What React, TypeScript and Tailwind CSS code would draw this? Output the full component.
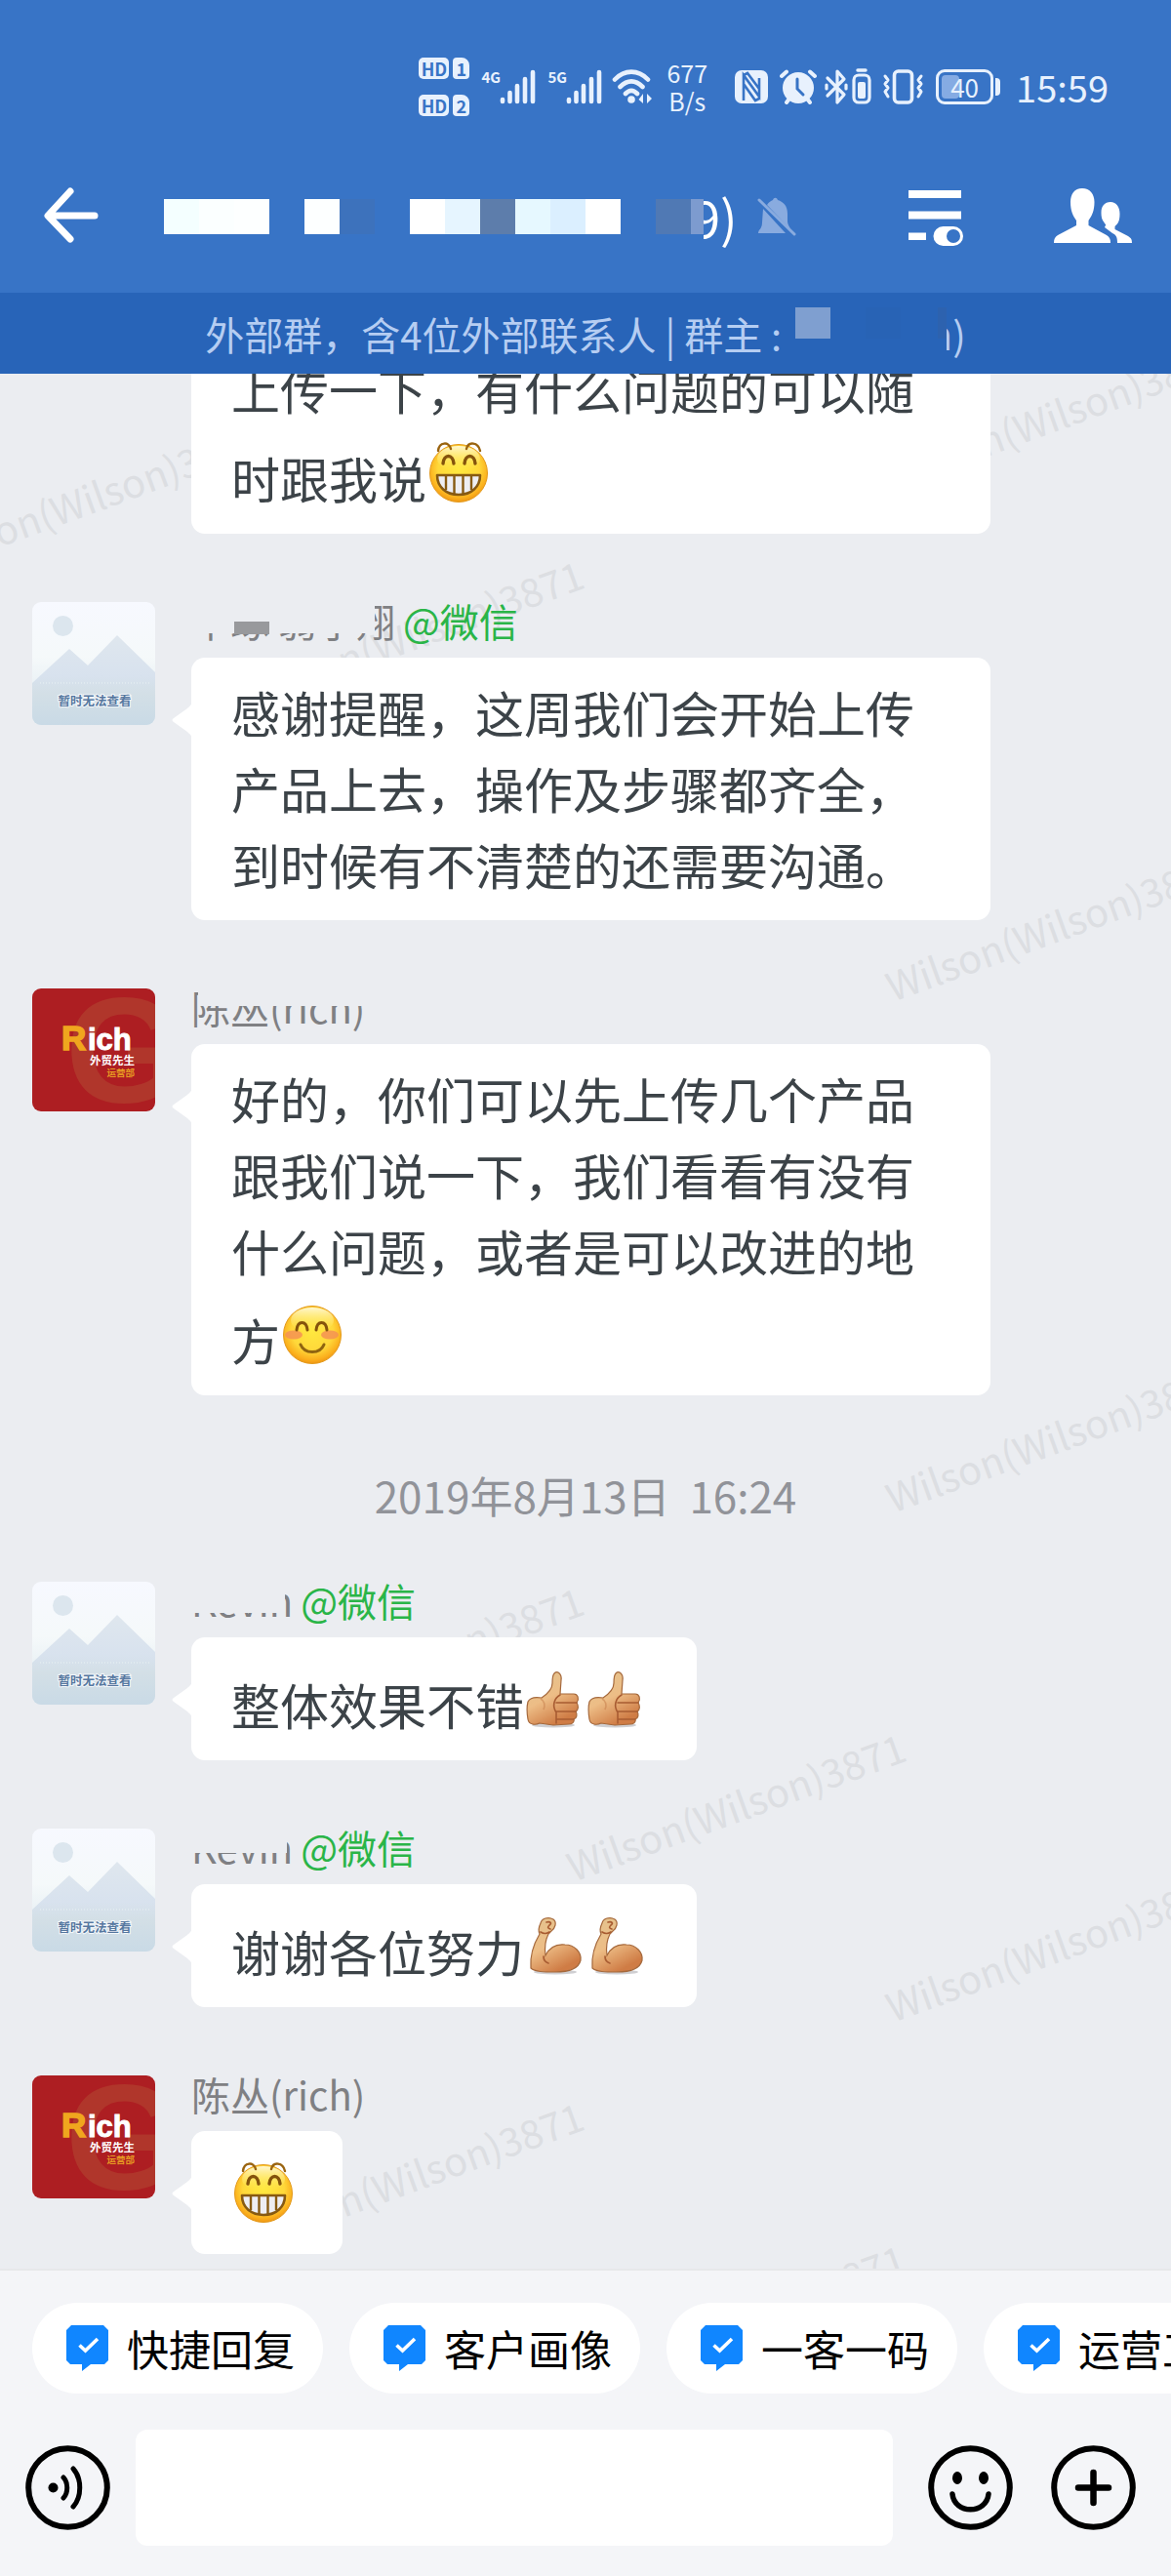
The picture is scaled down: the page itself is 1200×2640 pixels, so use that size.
import type { ReactNode } from "react";

type EmojiName = "grin" | "smile" | "thumb" | "muscle";

type Message = {
  id: number;
  avatar?: "placeholder" | "rich";
  name?: string;
  wechat?: boolean;
  // patches that hide parts of the sender's name
  masks?: string[];
  text: string;
  emojis: EmojiName[];
};

const BEFORE: Message[] = [
  {
    id: 1,
    text: "上传一下，有什么问题的可以随时跟我说",
    emojis: ["grin"],
  },
  {
    id: 2,
    avatar: "placeholder",
    name: "中琢 弱子翔",
    wechat: true,
    masks: [
      "left-0 top-0 h-8 w-[188px] bg-[#ebedf1]",
      "left-[44px] top-5 h-[13px] w-9 bg-[#98999c]",
    ],
    text: "感谢提醒，这周我们会开始上传产品上去，操作及步骤都齐全，到时候有不清楚的还需要沟通。",
    emojis: [],
  },
  {
    id: 3,
    avatar: "rich",
    name: "陈丛(rich)",
    masks: ["left-[7px] -top-2 h-[26px] w-[180px] bg-[#ebedf1]"],
    text: "好的，你们可以先上传几个产品跟我们说一下，我们看看有没有什么问题，或者是可以改进的地方",
    emojis: ["smile"],
  },
];

const AFTER: Message[] = [
  {
    id: 4,
    avatar: "placeholder",
    name: "Kevin",
    wechat: true,
    masks: ["left-0 top-0 h-8 w-[96px] bg-[#ebedf1]"],
    text: "整体效果不错",
    emojis: ["thumb", "thumb"],
  },
  {
    id: 5,
    avatar: "placeholder",
    name: "Kevin",
    wechat: true,
    masks: ["left-0 top-0 h-[25px] w-[98px] bg-[#ebedf1]"],
    text: "谢谢各位努力",
    emojis: ["muscle", "muscle"],
  },
  {
    id: 6,
    avatar: "rich",
    name: "陈丛(rich)",
    text: "",
    emojis: ["grin"],
  },
];

const TITLE_BLOCKS = [
  "bg-[#f4ffff]",
  "bg-[#fbffff]",
  "bg-[#fdffff]",
  "bg-transparent",
  "bg-[#fdffff]",
  "bg-[#3d72bc]",
  "bg-transparent",
  "bg-white",
  "bg-[#e6f5ff]",
  "bg-[#5d7dab]",
  "bg-[#e6f8ff]",
  "bg-[#dbefff]",
  "bg-white",
  "bg-transparent",
  "bg-[#5079b4]",
];

const WATERMARKS = [
  [-72, 204],
  [258, 344],
  [915, 120],
  [915, 644],
  [915, 1168],
  [258, 1396],
  [588, 1546],
  [915, 1690],
  [258, 1924],
  [588, 2070],
];

const SHORTCUTS = ["快捷回复", "客户画像", "一客一码", "运营工具"];

const Gradients = () => (
  <svg className="absolute size-0" aria-hidden="true">
    <defs>
      <radialGradient id="face" cx="0.5" cy="0.42" r="0.6">
        <stop offset="0" stopColor="#ffe93f" />
        <stop offset="0.6" stopColor="#ffd83a" />
        <stop offset="0.85" stopColor="#fbb01d" />
        <stop offset="1" stopColor="#ec8f10" />
      </radialGradient>
      <linearGradient id="shine" x1="0" y1="0" x2="0" y2="1">
        <stop offset="0" stopColor="#fffbe0" stopOpacity="0.9" />
        <stop offset="1" stopColor="#ffe94a" stopOpacity="0" />
      </linearGradient>
      <linearGradient id="skin" x1="0" y1="0" x2="0.5" y2="1">
        <stop offset="0" stopColor="#e3c48f" />
        <stop offset="0.55" stopColor="#edbd86" />
        <stop offset="1" stopColor="#cf7c45" />
      </linearGradient>
      <linearGradient id="sky" x1="0" y1="0" x2="0" y2="1">
        <stop offset="0" stopColor="#f7f9ff" />
        <stop offset="0.45" stopColor="#f5f9fa" />
        <stop offset="1" stopColor="#dbe6ee" />
      </linearGradient>
      <linearGradient id="hill" x1="0" y1="0" x2="0" y2="1">
        <stop offset="0" stopColor="#dfe7ee" />
        <stop offset="0.45" stopColor="#d8e2ee" />
        <stop offset="0.65" stopColor="#d3dfe6" />
        <stop offset="1" stopColor="#c9dae6" />
      </linearGradient>
    </defs>
  </svg>
);

const Emoji = ({ name }: { name: EmojiName }) => (
  <svg
    viewBox="0 0 63 60"
    className="mt-[18px] inline-block h-[60px] w-[63px] overflow-visible align-[-4px]"
    role="img"
    aria-label={name}
  >
    {(name === "grin" || name === "smile") && (
      <>
        <circle cx="33" cy="30" r="29.5" fill="url(#face)" stroke="#e39a1c" />
        <ellipse cx="33" cy="15" rx="22" ry="13" fill="url(#shine)" />
      </>
    )}
    {name === "grin" && (
      <g transform="translate(1 0)">
        <g fill="none" stroke="#9a6410" strokeWidth="2.4" strokeLinecap="round">
          <path d="M11 7C12-2 22-3 24 5" />
          <path d="M40 5C42-3 52-2 54 7" />
        </g>
        <g fill="none" stroke="#84530c" strokeWidth="3.4" strokeLinecap="round">
          <path d="M16 20C17 10 26 10 27 20" />
          <path d="M38 20C39 10 48 10 49 20" />
        </g>
        <path d="M10 32H54C54 44 45 52 32 52S10 44 10 32Z" fill="#eeeef2" stroke="#875a12" strokeWidth="2.6" strokeLinejoin="round" />
        <path d="M19 33V47M27.500 33V51M36.500 33V51M45 33V47" stroke="#875a12" strokeWidth="2.400" />
      </g>
    )}
    {name === "smile" && (
      <g transform="translate(1 0)">
        <ellipse cx="13" cy="30" rx="9" ry="4.500" fill="#f59254" opacity="0.850" />
        <ellipse cx="50" cy="30" rx="9" ry="4.500" fill="#f59254" opacity="0.850" />
        <g fill="none" stroke="#84530c" strokeWidth="3" strokeLinecap="round">
          <path d="M16 25C17 15 26 15 27 25" />
          <path d="M36 25C37 15 46 15 47 25" />
          <path d="M20 40C24 50 40 50 44 40" stroke="#8f6410" />
        </g>
      </g>
    )}
    {name === "thumb" && (
      <>
        <ellipse cx="30" cy="56" rx="22" ry="2.500" fill="#cfcfd2" />
        <path
          d="M31 3C34 0 39 3 38 10L37 24H51C55 24 57 29 54 33C56 36 56 40 53 42C55 45 54 49 51 50C52 53 49 55 46 55L30 56L16 54C12 56 5 56 4 50C3 44 3 36 4 32C6 28 12 27 18 28C24 24 29 18 29 13C29 9 29 5 31 3Z"
          fill="url(#skin)"
          stroke="#a5683b"
          strokeWidth="1.200"
        />
        <path d="M37 25C30 29 29 37 33 43M33 33H54M33 42H53M33 50H51M33 43V54" fill="none" stroke="#a85c32" strokeWidth="1.600" strokeLinecap="round" />
        <path d="M17 29C21 31 22 36 20 40" fill="none" stroke="#c98350" strokeWidth="1.600" opacity="0.600" />
      </>
    )}
    {name === "muscle" && (
      <>
        <ellipse cx="32" cy="56" rx="22" ry="2.500" fill="#cfcfd2" />
        <path
          d="M17 6C18 1 25-1 30 2C34 5 32 11 28 14L25 17C21 25 21 32 22 39C26 31 33 27 42 28C52 28 59 36 58 44C56 52 46 56 32 56C21 56 11 56 7 52C6 40 10 27 16 17C14 13 15 10 17 6Z"
          fill="url(#skin)"
          stroke="#a5683b"
          strokeWidth="1.200"
        />
        <path d="M20 40C20 44 22 46 25 47M17 15C20 17 23 17 26 15M23 5C27 4 29 6 26 8C24 10 24 11 27 12" fill="none" stroke="#a85c32" strokeWidth="1.700" strokeLinecap="round" />
      </>
    )}
  </svg>
);

const PlaceholderAvatar = () => (
  <svg viewBox="0 0 126 126" className="size-[126px] shrink-0 rounded-[9px]">
    <rect width="126" height="126" fill="url(#sky)" />
    <circle cx="31.500" cy="24.500" r="10.500" fill="#dce6ee" />
    <path d="M0 83L38 48L57 65L87 34L126 72V126H0Z" fill="url(#hill)" />
    <path d="M8 83H122" stroke="#eaf2f4" strokeDasharray="1 2" />
    <text
      x="64"
      y="106"
      textAnchor="middle"
      fontSize="12.500"
      fontWeight="700"
      fill="#56779f"
      stroke="#f4f8fb"
      strokeWidth="2"
      paintOrder="stroke"
    >
      暂时无法查看
    </text>
  </svg>
);

const RichAvatar = () => (
  <svg viewBox="0 0 126 126" className="size-[126px] shrink-0 rounded-[9px] font-['Liberation_Sans','Noto_Sans_CJK_SC',sans-serif]">
    <rect width="126" height="126" fill="#ad1e22" />
    <text x="34" y="117" fontSize="154" fontWeight="700" fill="#b0362b">
      G
    </text>
    <text x="30" y="63" fontSize="35" fontWeight="700" fill="#f0a61e" stroke="#f0a61e" strokeWidth="1.500">
      R
    </text>
    <text x="57" y="63" fontSize="31" fontWeight="700" fill="#fff" stroke="#fff" strokeWidth="1">
      ich
    </text>
    <text x="105" y="78" textAnchor="end" fontSize="11.500" fontWeight="700" fill="#fff">
      外贸先生
    </text>
    <text x="105" y="90" textAnchor="end" fontSize="9.500" fontWeight="700" fill="#e79a22">
      运营部
    </text>
  </svg>
);

const SignalBars = () => (
  <svg viewBox="0 0 37 36" className="h-9 w-[37px]" stroke="#e8f1fd" strokeWidth="4.600" strokeLinecap="round">
    <path d="M3 33V31M10.500 33V24M18 33V17M26 33V10M34 33V3" />
  </svg>
);

const HdBadge = ({ sim }: { sim: string }) => (
  <div className="flex gap-1 text-[18px] leading-[22px] font-bold text-[#3874c6]">
    <span className="w-[31px] rounded-[5px] bg-[#e8f1fd] text-center">HD</span>
    <span className="w-[17px] rounded-[4px] rounded-tr-[8px] bg-[#e8f1fd] text-center">{sim}</span>
  </div>
);

const StatusBar = () => (
  <div className="flex h-[178px] items-center justify-end pr-16 text-[#e8f1fd]">
    <div className="mr-3 flex flex-col gap-4">
      <HdBadge sim="1" />
      <HdBadge sim="2" />
    </div>
    <div className="mr-3 flex items-start">
      <span className="w-[19px] text-[15px] leading-4 font-bold">4G</span>
      <SignalBars />
    </div>
    <div className="mr-2.5 flex items-start">
      <span className="w-[19px] text-[15px] leading-4 font-bold">5G</span>
      <SignalBars />
    </div>
    <svg viewBox="0 0 42 36" className="mr-3.5 h-9 w-[42px]" fill="none" stroke="#e8f1fd" strokeWidth="4.600" strokeLinecap="round">
      <path d="M3 10.500C13 0 27 0 37 10.500M8.500 18C16 10.500 24 10.500 31.500 18M14 25C18 21 22 21 26 25" />
      <circle cx="20" cy="31" r="3.800" fill="#e8f1fd" stroke="none" />
      <path d="M32 25V35L27.500 31ZM36 25L41 30L36 35Z" fill="#e8f1fd" stroke="none" />
    </svg>
    <div className="mr-7 text-center text-[25px] leading-[29px]">
      <div>677</div>
      <div>B/s</div>
    </div>
    <svg viewBox="0 0 34 34" className="mr-3 h-[34px] w-[34px]">
      <rect width="34" height="34" rx="7" fill="#e8f1fd" />
      <path d="M9 31V5L25 27V8M9 5L13 3L25 19M9 14L21 31L25 29" fill="none" stroke="#3874c6" strokeWidth="2.600" />
    </svg>
    <svg viewBox="0 0 38 36" className="mr-2 h-9 w-[38px]" fill="none" stroke="#e8f1fd" strokeWidth="4" strokeLinecap="round">
      <circle cx="19" cy="19" r="16" fill="#e8f1fd" stroke="none" />
      <path d="M2 7L7 2.500M31 2.500L36 7M7 34L10 30M31 34L28 30" />
      <path d="M18 10V20L24 26" stroke="#3874c6" strokeWidth="3" />
    </svg>
    <svg viewBox="0 0 49 38" className="mr-2.5 h-[38px] w-[49px]" fill="none" stroke="#e8f1fd" strokeWidth="3.200" strokeLinecap="round" strokeLinejoin="round">
      <path d="M3 10L20 27L13 35V3L20 11L3 28" />
      <path d="M2 17V21M22 17V21" />
      <rect x="30" y="7" width="16" height="28" rx="5" />
      <path d="M34 2H42" strokeWidth="3.500" />
      <rect x="34" y="14" width="8" height="17" rx="2" fill="#e8f1fd" stroke="none" />
    </svg>
    <svg viewBox="0 0 43 36" className="mr-3 h-9 w-[43px]" fill="none" stroke="#e8f1fd" strokeWidth="3.600" strokeLinecap="round" strokeLinejoin="round">
      <rect x="12.500" y="2" width="18" height="32" rx="4" />
      <path d="M3 7L6 11L3 15L6 19L3 23L6 28M40 7L37 11L40 15L37 19L40 23L37 28" strokeWidth="3" />
    </svg>
    <div className="mr-4 flex items-center">
      <div className="relative h-9 w-[59px] rounded-[9px] border-[3px] border-[#e8f1fd] p-[3px]">
        <div className="h-full w-[18px] rounded-[4px] bg-[#85abe3]" />
        <span className="absolute inset-0 text-center text-[26px] leading-[29px]">40</span>
      </div>
      <div className="ml-0.5 h-[18px] w-[5px] rounded-r-[4px] bg-[#e8f1fd]" />
    </div>
    <div className="text-[38px] leading-none">15:59</div>
  </div>
);

const TitleBar = () => (
  <div className="flex h-[122px] items-start">
    <button type="button" aria-label="返回" className="ml-[42px] mt-3">
      <svg viewBox="0 0 60 60" className="size-[60px]" fill="none" stroke="#fff" strokeWidth="7" strokeLinecap="round" strokeLinejoin="round">
        <path d="M30 6L7 31L30 55M8 31H55" />
      </svg>
    </button>
    <h1 className="ml-[66px] mt-[18px] flex flex-1 items-center text-[52px] leading-[52px] text-white">
      {TITLE_BLOCKS.map((color, i) => (
        <span key={i} className={`size-9 shrink-0 ${color}`} />
      ))}
      <span className="h-9 w-[13px] bg-[#7d9bcf]" />
      <span className="flex w-[17px] justify-end overflow-hidden">9</span>
      <span>)</span>
      <svg viewBox="0 0 40 40" className="ml-5 size-10 shrink-0" fill="#89abdf">
        <path d="M6 12L29 37H1C1 33 5 33 5 26ZM10 8C12 5 14 4 16 3C17 0 20 0 21 3C27 5 31 9 31 17V25C31 28 33 30 34 33Z" />
        <path d="M2 3L38 38" stroke="#89abdf" strokeWidth="3" strokeLinecap="round" />
      </svg>
    </h1>
    <button type="button" aria-label="筛选" className="mr-[92px] mt-[17px]">
      <svg viewBox="0 0 57 58" className="h-[58px] w-[57px]" fill="#fff">
        <path d="M0 0H54V8H0ZM0 21.500H54V29.500H0ZM0 43.500H18V51H0Z" />
        <rect x="25.500" y="37" width="30.500" height="20" rx="10" />
        <circle cx="46" cy="47" r="7" fill="#3874c6" />
      </svg>
    </button>
    <button type="button" aria-label="群成员" className="mr-10 mt-[15px]">
      <svg viewBox="0 0 80 57" className="h-[57px] w-20" fill="#fff">
        <path d="M29 0C37 0 41.500 6 41.500 14C41.500 23 39 28 35.500 33V38L54 48C57 50 58 52 58 56H0C0 52 1 50 4 48L23 38V33C19.500 28 17 23 17 14C17 6 21 0 29 0Z" />
        <path d="M58 14C64 14 67.500 19 67.500 26C67.500 33 66 36 62.500 39V42L76 49C79 51 80 52 80 56H65C65 50 64 48 60 46L52 40C54 36 53 38 51.500 35C49 32 48.500 29 48.500 25C48.500 18 52 14 58 14Z" />
      </svg>
    </button>
  </div>
);

const GroupNotice = () => (
  <div className="flex h-[83px] items-center justify-center bg-[#2864b8] text-[40px] whitespace-pre text-[#b5cdf2]">
    <span>外部群，含4位外部联系人 | 群主 :</span>
    <span className="mb-[22px] ml-3.5 h-8 w-9 bg-[#7f9fd0]" />
    <span className="mb-[22px] ml-9 h-8 w-9 bg-[#2863b5]" />
    <span className="mb-[22px] ml-[38px] h-8 w-[9px] bg-[#2d62af]" />
    <span className="flex w-1.5 justify-end overflow-hidden">n</span>
    <span>)</span>
  </div>
);

const Bubble = ({ children, tail }: { children: ReactNode; tail?: boolean }) => (
  <div className="relative w-fit rounded-[14px] bg-white pt-4 pr-[51px] pb-[19px] pl-[41px] text-[50px] leading-[78px] text-[#3c4348]">
    {tail && (
      <svg viewBox="0 0 21 38" className="absolute top-[45px] -left-5 h-[38px] w-[21px]" fill="#fff">
        <path d="M21 0C20 4 18 5 16 7L2 17C0 18 0 20 2 21L16 31C18 33 20 34 21 38Z" />
      </svg>
    )}
    {children}
  </div>
);

const ChatMessage = ({ message }: { message: Message }) => (
  <article className="flex shrink-0 items-start gap-[37px] pr-[185px] pl-[33px]">
    {message.avatar === "placeholder" && <PlaceholderAvatar />}
    {message.avatar === "rich" && <RichAvatar />}
    {!message.avatar && <div className="size-[126px] shrink-0" />}
    <div className="min-w-0 flex-1">
      {message.name && (
        <div className="relative mb-[19px] flex h-[38px] items-center gap-2 text-[40px] leading-[38px] text-[#7f8083]">
          <span>{message.name}</span>
          {message.masks?.map((mask) => (
            <span key={mask} className={`absolute ${mask}`} />
          ))}
          {message.wechat && <span className="text-[#2ab548]">@微信</span>}
        </div>
      )}
      <Bubble tail={!!message.name}>
        {message.text}
        {message.emojis.map((emoji, i) => (
          <Emoji key={i} name={emoji} />
        ))}
      </Bubble>
    </div>
  </article>
);

const Watermark = () => (
  <svg className="absolute inset-0 size-full" fill="#dcdee2" fontSize="40" aria-hidden="true">
    {WATERMARKS.map(([x, y]) => (
      <text key={`${x}-${y}`} transform={`translate(${x} ${y}) rotate(-20)`}>
        Wilson(Wilson)3871
      </text>
    ))}
  </svg>
);

const Shortcut = ({ label }: { label: string }) => (
  <button
    type="button"
    className="flex h-[93px] shrink-0 items-center gap-[19px] rounded-full bg-white pr-[29px] pl-[35px] text-[43px] leading-none text-black"
  >
    <svg viewBox="0 0 43 47" className="h-[47px] w-[43px]">
      <path d="M5 0H38L43 5V36L39 40H25L16 47V40H4L0 36V5Z" fill="#1086ff" />
      <path d="M13.500 20.500L19.500 26L32 14" fill="none" stroke="#fff" strokeWidth="3.600" />
    </svg>
    {label}
  </button>
);

const RoundIcon = ({ label, children }: { label: string; children: ReactNode }) => (
  <button type="button" aria-label={label} className="shrink-0">
    <svg viewBox="0 0 87 87" className="size-[87px]" fill="none" stroke="#000" strokeWidth="6" strokeLinecap="round">
      <circle cx="43.500" cy="43.500" r="40.300" />
      {children}
    </svg>
  </button>
);

const Composer = () => (
  <footer className="border-t-2 border-[#e7e8ea] bg-[#f4f5f8] pt-[33px] pb-[31px]">
    <div className="flex gap-[27px] overflow-hidden pl-[33px]">
      {SHORTCUTS.map((label) => (
        <Shortcut key={label} label={label} />
      ))}
    </div>
    <div className="mt-[37px] flex items-center pr-9 pl-[26px]">
      <RoundIcon label="语音">
        <circle cx="28.500" cy="43.500" r="5" fill="#000" stroke="none" />
        <path d="M39 33C44 38 44 49 39 54M49 24C58 34 58 53 49 63" strokeWidth="5" />
      </RoundIcon>
      <input
        aria-label="消息"
        className="mr-9 ml-[26px] h-[119px] min-w-0 flex-1 rounded-[12px] bg-white px-6 text-[50px] outline-none"
      />
      <div className="flex gap-[39px]">
        <RoundIcon label="表情">
          <ellipse cx="30" cy="33.500" rx="5" ry="6.500" fill="#000" stroke="none" />
          <ellipse cx="57" cy="33.500" rx="5" ry="6.500" fill="#000" stroke="none" />
          <path d="M25 50C27 71 60 71 62 50" strokeWidth="5.500" />
        </RoundIcon>
        <RoundIcon label="更多">
          <path d="M28 43.500H59M43.500 28V59" strokeWidth="6.500" />
        </RoundIcon>
      </div>
    </div>
  </footer>
);

export default function App() {
  return (
    <div className="flex h-screen flex-col overflow-hidden bg-[#ebedf1] font-['Noto_Sans_CJK_SC',sans-serif]">
      <Gradients />
      <header className="shrink-0 bg-[#3874c6]">
        <StatusBar />
        <TitleBar />
        <GroupNotice />
      </header>
      <main className="relative flex min-h-0 flex-1 flex-col justify-end overflow-hidden">
        <Watermark />
        <div className="relative flex flex-col gap-[70px] pb-[15px]">
          {BEFORE.map((message) => (
            <ChatMessage key={message.id} message={message} />
          ))}
          <time className="-my-px block h-[53px] text-center text-[44px] leading-[66px] whitespace-pre text-[#919399]">
            2019年8月13日{"  "}16:24
          </time>
          {AFTER.map((message) => (
            <ChatMessage key={message.id} message={message} />
          ))}
        </div>
      </main>
      <Composer />
    </div>
  );
}
